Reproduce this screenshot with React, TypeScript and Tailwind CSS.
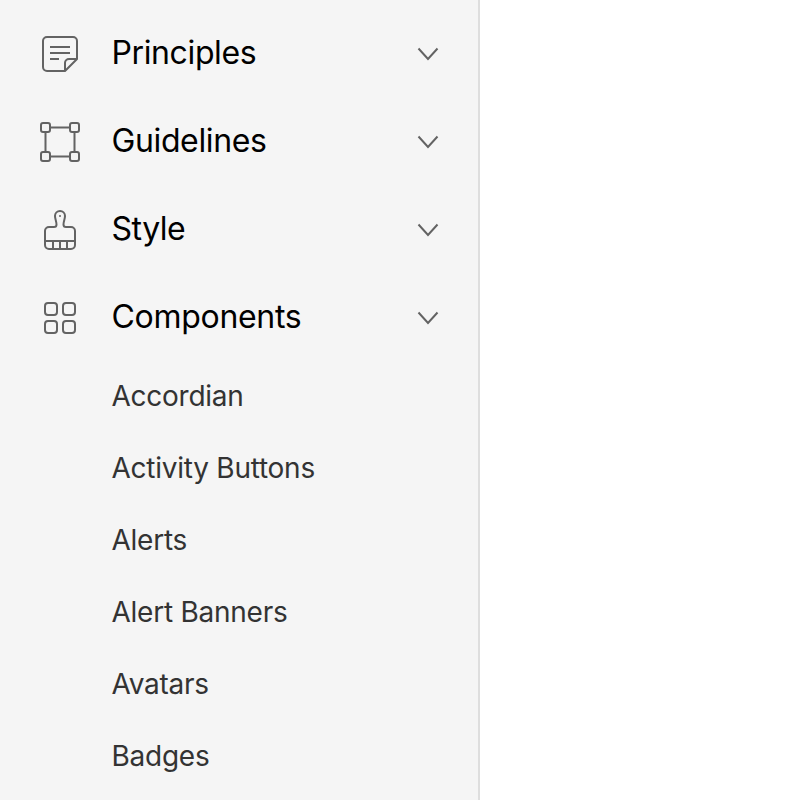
import type { ReactNode } from "react";

const sections: { label: string; tracking: string; icon: ReactNode }[] = [
  {
    label: "Principles",
    tracking: "tracking-[-0.38px]",
    icon: (
      <>
        <path d="M37 25V7a4 4 0 0 0-4-4H7a4 4 0 0 0-4 4v26a4 4 0 0 0 4 4h18L37 25H29a4 4 0 0 0-4 4v8" />
        <path d="M10 13h20M10 19h20M10 25h9" />
      </>
    ),
  },
  {
    label: "Guidelines",
    tracking: "tracking-[-0.38px]",
    icon: (
      <>
        <rect x="1" y="1" width="9" height="9" rx="2" />
        <rect x="30" y="1" width="9" height="9" rx="2" />
        <rect x="1" y="30" width="9" height="9" rx="2" />
        <rect x="30" y="30" width="9" height="9" rx="2" />
        <path d="M10 5.5h20M10 34.5h20M5.5 10v20M34.5 10v20" />
      </>
    ),
  },
  {
    label: "Style",
    tracking: "tracking-[-0.5px]",
    icon: (
      <>
        <path d="M9 17h5a2.5 2.5 0 0 0 2.5-2.5C16.5 11 15 9 15 6a5 5 0 0 1 10 0c0 3-1.5 5-1.5 8.5A2.5 2.5 0 0 0 26 17h5a4 4 0 0 1 4 4v14a4 4 0 0 1-4 4H9a4 4 0 0 1-4-4V21a4 4 0 0 1 4-4Z" />
        <path d="M5 31h30M13 31v8M20 31v8M27 31v8" />
        <circle cx="20" cy="6" r="1" fill="currentColor" stroke="none" />
      </>
    ),
  },
  {
    label: "Components",
    tracking: "tracking-[-0.3px]",
    icon: (
      <>
        <rect x="5" y="5" width="12" height="12" rx="3" />
        <rect x="23" y="5" width="12" height="12" rx="3" />
        <rect x="5" y="23" width="12" height="12" rx="3" />
        <rect x="23" y="23" width="12" height="12" rx="3" />
      </>
    ),
  },
];

const components = ["Accordian", "Activity Buttons", "Alerts", "Alert Banners", "Avatars", "Badges"];

export default function App() {
  return (
    <div className="flex h-screen overflow-hidden bg-white font-['Inter','Liberation_Sans',sans-serif]">
      <nav className="w-[480px] shrink-0 overflow-hidden border-r-2 border-[#dedede] bg-[#f5f5f5] pt-2.5">
        {sections.map((s) => (
          <button key={s.label} className="flex h-[88px] w-full items-center pr-[38px] pl-10 text-left">
            <svg className="size-10 shrink-0 text-[#636363]" viewBox="0 0 40 40" fill="none" stroke="currentColor" strokeWidth="2" strokeLinejoin="round" strokeLinecap="butt">
              {s.icon}
            </svg>
            <span className={"ml-[31.5px] flex-1 pb-0.5 text-[32px] leading-10 text-black " + s.tracking}>{s.label}</span>
            <svg className="h-4 w-6 shrink-0 text-[#636363]" viewBox="0 0 24 16" fill="none" stroke="currentColor" strokeWidth="2">
              <path d="M2.5 2.5 12 12.9 21.5 2.5" />
            </svg>
          </button>
        ))}
        <ul>
          {components.map((c) => (
            <li key={c} className="flex h-[72px] items-center pb-1 pl-[111.5px] text-[28px] tracking-[-0.25px] text-[#333333]">
              {c}
            </li>
          ))}
        </ul>
      </nav>
      <main className="flex-1" />
    </div>
  );
}
